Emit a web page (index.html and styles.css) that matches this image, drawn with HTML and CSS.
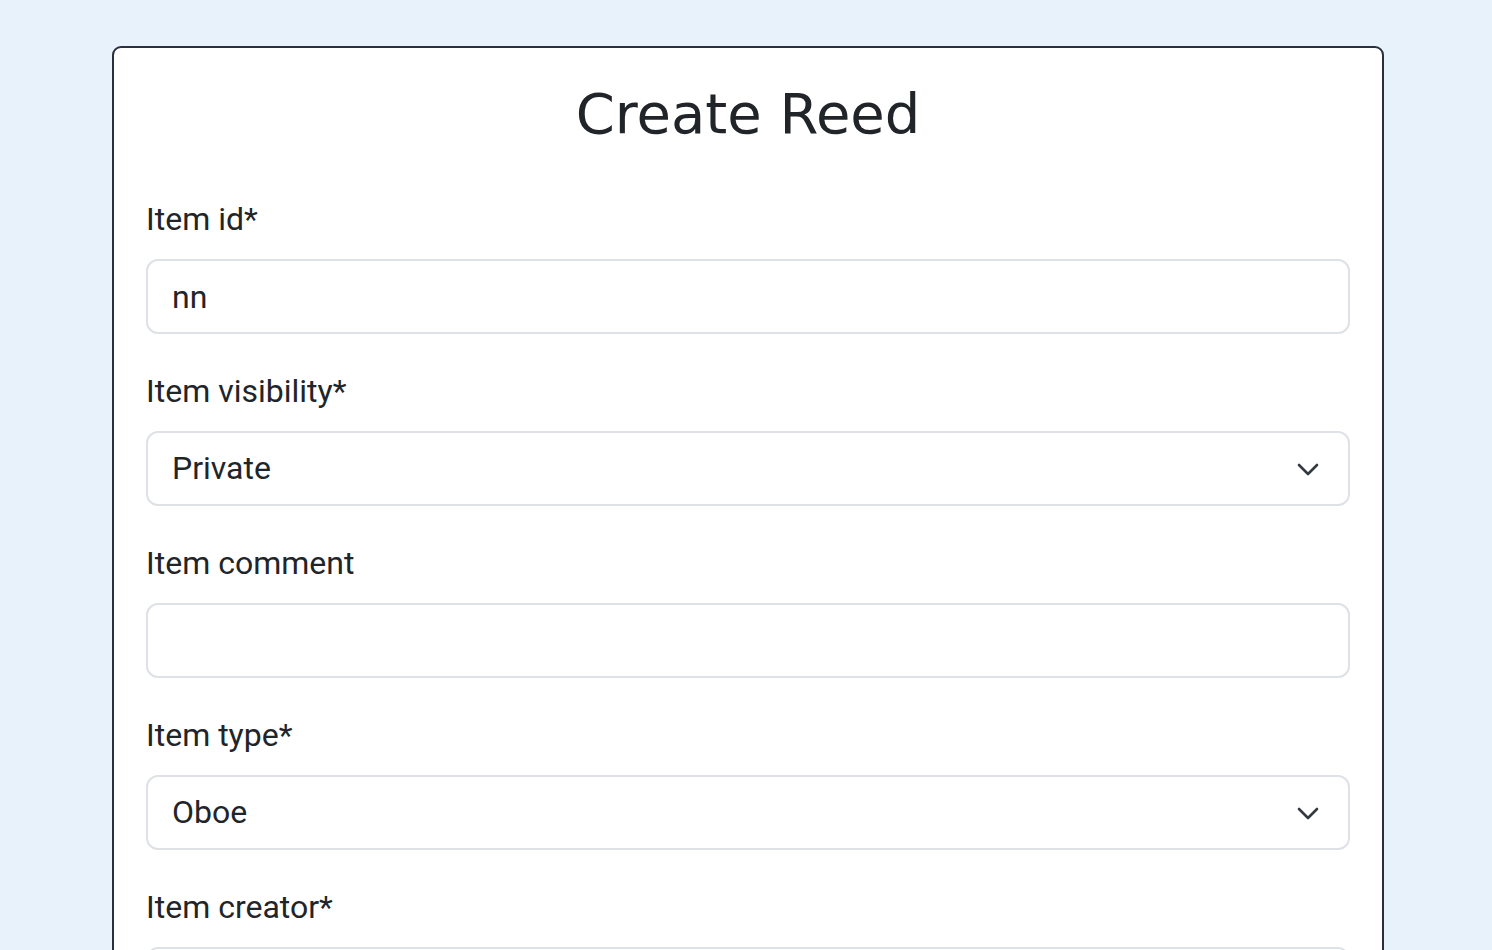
FILE: index.html
```html
<!DOCTYPE html>
<html lang="en">
<head>
<meta charset="utf-8">
<title>Create Reed</title>
<link rel="stylesheet" href="styles.css">
</head>
<body>
<main class="page">
  <form class="card">
    <h1 class="title">Create Reed</h1>

    <div class="field">
      <label class="label" for="item-id">Item id*</label>
      <input class="control" id="item-id" type="text" value="nn">
    </div>

    <div class="field">
      <label class="label" for="item-vis">Item visibility*</label>
      <div class="select-wrap">
        <select class="control select" id="item-vis">
          <option>Private</option>
          <option>Public</option>
        </select>
        <svg class="chevron" viewBox="0 0 22 13" width="22" height="13" aria-hidden="true"><path d="M2 2l9 9 9-9" fill="none" stroke="#343a40" stroke-width="2.6" stroke-linecap="round" stroke-linejoin="round"/></svg>
      </div>
    </div>

    <div class="field">
      <label class="label" for="item-comment">Item comment</label>
      <input class="control" id="item-comment" type="text" value="">
    </div>

    <div class="field">
      <label class="label" for="item-type">Item type*</label>
      <div class="select-wrap">
        <select class="control select" id="item-type">
          <option>Oboe</option>
          <option>Bassoon</option>
        </select>
        <svg class="chevron" viewBox="0 0 22 13" width="22" height="13" aria-hidden="true"><path d="M2 2l9 9 9-9" fill="none" stroke="#343a40" stroke-width="2.6" stroke-linecap="round" stroke-linejoin="round"/></svg>
      </div>
    </div>

    <div class="field">
      <label class="label" for="item-creator">Item creator*</label>
      <input class="control" id="item-creator" type="text" value="">
    </div>
  </form>
</main>
</body>
</html>
```

FILE: styles.css
```css
* { box-sizing: border-box; }

html, body {
  margin: 0;
  padding: 0;
  background: #e8f2fa;
}

body {
  font-family: Roboto, "Liberation Sans", sans-serif;
  color: #212529;
  overflow: hidden;
  height: 950px;
}

.page {
  padding: 46px 0 0 112px;
  display: flex;
}

.card {
  width: 1272px;
  background: #ffffff;
  border: 2px solid #2b2f3f;
  border-radius: 9px;
  padding: 33px 32px 40px;
  display: flex;
  flex-direction: column;
}

.title {
  margin: 0 0 50px;
  font-family: "DejaVu Sans", sans-serif;
  font-weight: 400;
  font-size: 56px;
  line-height: 66px;
  text-align: center;
  color: #212529;
}

.field {
  display: flex;
  flex-direction: column;
  margin-bottom: 35px;
}

.label {
  font-size: 32px;
  line-height: 45px;
  margin-bottom: 17px;
}

.control {
  width: 100%;
  height: 75px;
  font-family: Roboto, "Liberation Sans", sans-serif;
  font-size: 32px;
  line-height: 45px;
  color: #212529;
  background: #ffffff;
  border: 2px solid #dee2e6;
  border-radius: 12px;
  padding: 12px 24px;
  outline: none;
}

.select-wrap {
  position: relative;
}

.select {
  appearance: none;
  -webkit-appearance: none;
  padding-right: 70px;
}

.chevron {
  position: absolute;
  right: 31px;
  top: 32px;
  width: 22px;
  height: 13px;
  pointer-events: none;
}
```
